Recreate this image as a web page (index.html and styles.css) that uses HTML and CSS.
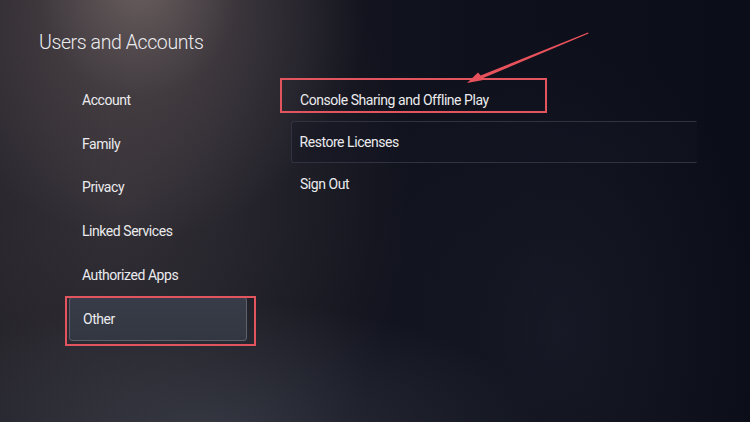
FILE: index.html
```html
<!DOCTYPE html>
<html lang="en">
<head>
<meta charset="utf-8">
<title>Users and Accounts</title>
<link rel="stylesheet" href="styles.css">
</head>
<body>
<div class="screen">
  <h1 class="title">Users and Accounts</h1>
  <div class="content">
    <ul class="nav">
      <li class="nav-item">Account</li>
      <li class="nav-item">Family</li>
      <li class="nav-item">Privacy</li>
      <li class="nav-item">Linked Services</li>
      <li class="nav-item">Authorized Apps</li>
      <li class="nav-item nav-item-selected"><span class="nav-box">Other</span></li>
    </ul>
    <ul class="options">
      <li class="option">Console Sharing and Offline Play</li>
      <li class="option option-focused">Restore Licenses</li>
      <li class="option">Sign Out</li>
    </ul>
  </div>
  <div class="mark mark-other"></div>
  <div class="mark mark-console"></div>
  <svg class="arrow" width="750" height="422" viewBox="0 0 750 422">
    <polygon points="588,32.4 588.6,33.6 482,78.6 480.6,75.4" fill="#e8525c"/>
    <polygon points="467,83 478,72.6 484.6,79.8" fill="#e8525c"/>
  </svg>
</div>
</body>
</html>
```
FILE: styles.css
```css
* { box-sizing: border-box; }
html, body { margin: 0; padding: 0; }
body {
  width: 750px;
  height: 422px;
  overflow: hidden;
  font-family: Roboto, "Noto Sans", sans-serif;
  color: #ebebee;
}
.screen {
  position: relative;
  width: 750px;
  height: 422px;
  overflow: hidden;
  padding: 31px 0 0 39px;
  background:
    radial-gradient(ellipse 230px 260px at 140px -20px, rgba(150,132,128,0.62), rgba(115,100,100,0.32) 45%, rgba(0,0,0,0) 100%),
    radial-gradient(ellipse 330px 130px at 210px 430px, rgba(80,86,98,0.45), rgba(0,0,0,0) 100%),
    radial-gradient(ellipse 290px 340px at 120px 200px, rgba(72,66,70,0.55), rgba(0,0,0,0) 100%),
    radial-gradient(ellipse 200px 300px at 560px 330px, rgba(40,44,58,0.35), rgba(0,0,0,0) 100%),
    linear-gradient(90deg, #1d1c24 0%, #151620 35%, #0e101b 65%, #0b0d18 100%);
}
.title {
  margin: 0;
  font-weight: 300;
  font-size: 19.5px;
  letter-spacing: -0.4px;
  line-height: 24px;
  color: #ececef;
}
.content {
  display: flex;
  margin-top: 23px;
  margin-left: 26px;
}
.nav, .options {
  list-style: none;
  margin: 0;
  padding: 0;
}
.nav { width: 226px; display: flex; flex-direction: column; }
.nav-item {
  height: 43.8px;
  display: flex;
  align-items: center;
  padding-left: 17px;
  font-size: 14px;
  letter-spacing: -0.45px;
}
.nav-item-selected { padding-left: 4px; }
.nav-box {
  display: flex;
  align-items: center;
  width: 178px;
  height: 44.5px;
  padding-left: 13px;
  border: 1px solid #5d616c;
  border-radius: 3px;
  background: linear-gradient(180deg, #383c48, #333741);
}
.options { width: 406px; display: flex; flex-direction: column; margin-top: 1px; }
.option {
  height: 42px;
  display: flex;
  align-items: center;
  padding-left: 9px;
  font-size: 14px;
  letter-spacing: -0.45px;
}
.option-focused {
  border: 1.5px solid #30333f;
  border-right-color: transparent;
  border-radius: 3px 0 0 3px;
  padding-left: 7.5px;
  background: rgba(20,22,34,0.4);
}
.mark {
  position: absolute;
  border: 2px solid #e2545e;
}
.mark-other { left: 65px; top: 296px; width: 191px; height: 50px; }
.mark-console { left: 280px; top: 78px; width: 267px; height: 35px; }
.arrow { position: absolute; left: 0; top: 0; }
```
